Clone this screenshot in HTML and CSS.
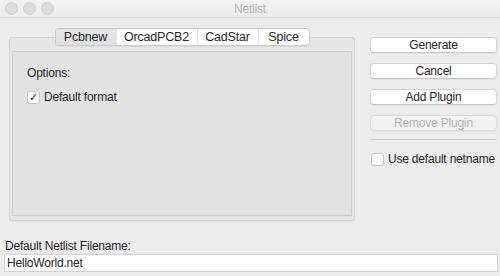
FILE: index.html
```html
<!DOCTYPE html>
<html lang="en">
<head>
  <meta charset="UTF-8">
  <meta name="viewport" content="width=device-width, initial-scale=1.0">
  <title>Netlist</title>
  <link rel="stylesheet" href="styles.css">
</head>
<body>
<div class="window">
  <!-- Title bar -->
  <div class="titlebar">
    <div class="lights">
      <span></span><span></span><span></span>
    </div>
    <div class="title">Netlist</div>
  </div>

  <div class="main">
    <!-- Format notebook -->
    <div class="notebook">
      <div class="tabs">
        <div class="tab selected tab-pcbnew">Pcbnew</div>
        <div class="tab tab-orcad">OrcadPCB2</div>
        <div class="tab tab-cadstar">CadStar</div>
        <div class="tab tab-spice">Spice</div>
      </div>
      <div class="page">
        <div class="page-inner">
          <div class="options-label">Options:</div>
          <label class="check">
            <span class="box checked">&#10003;</span>
            Default format
          </label>
        </div>
      </div>
    </div>

    <!-- Actions -->
    <div class="side">
      <button class="btn">Generate</button>
      <button class="btn">Cancel</button>
      <button class="btn">Add Plugin</button>
      <button class="btn" disabled>Remove Plugin</button>
      <div class="separator"></div>
      <label class="check">
        <span class="box"></span>
        Use default netname
      </label>
    </div>
  </div>

  <div class="filename">
    <div class="filename-label">Default Netlist Filename:</div>
    <div class="input">HelloWorld.net</div>
  </div>
</div>
</body>
</html>
```

FILE: styles.css
```css
body {
    margin: 0;
    padding: 0;
    background-color: #ececec;
    font-family: "Liberation Sans", Arial, sans-serif;
    font-size: 12px;
    letter-spacing: -0.2px;
    color: #262626;
}
.window {
    width: 500px;
    height: 276px;
    overflow: hidden;
}
.titlebar {
    height: 17px;
    border-bottom: 1px solid #d6d6d6;
    background: linear-gradient(#f3f3f3, #ebebeb);
    display: flex;
    align-items: center;
    position: relative;
}
.lights {
    display: flex;
    gap: 5px;
    padding-left: 5px;
}
.lights span {
    width: 11px;
    height: 11px;
    border-radius: 50%;
    background-color: #dcdcdc;
    border: 0.5px solid #d0d0d0;
}
.title {
    position: absolute;
    left: 0;
    right: 0;
    text-align: center;
    color: #b4b4b4;
    font-size: 12px;
}
.main {
    display: flex;
    padding: 10px 0 0 9px;
}
.notebook {
    width: 346px;
    display: flex;
    flex-direction: column;
    align-items: center;
}
.tabs {
    display: flex;
    height: 16px;
    border: 1px solid #c9c9c9;
    border-radius: 4px;
    background-color: white;
    margin-bottom: -9px;
    z-index: 1;
    box-shadow: 0 1px 0 rgba(0, 0, 0, 0.04);
}
.tab {
    text-align: center;
    line-height: 16px;
    font-size: 12.5px;
    border-left: 1px solid #e2e2e2;
}
.tab:first-child {
    border-left: none;
    border-radius: 3px 0 0 3px;
}
.tab.selected {
    background: linear-gradient(#e6e6e6, #dedede);
}
.tab-pcbnew { width: 60px; }
.tab-orcad { width: 80px; }
.tab-cadstar { width: 60px; }
.tab-spice { width: 50px; }
.page {
    align-self: stretch;
    height: 167px;
    padding: 13px 2px 2px 2px;
    background-color: #e6e6e6;
    border: 1px solid #d3d3d3;
    border-radius: 3px;
    box-shadow: 0 1px 1px rgba(0, 0, 0, 0.05);
}
.page-inner {
    height: 150px;
    background-color: #e2e2e2;
    border: 1px solid #cdcdcd;
    padding: 13px 0 0 14px;
}
.options-label {
    line-height: 16px;
    margin-bottom: 8px;
}
.check {
    display: flex;
    align-items: center;
    gap: 4px;
    line-height: 16px;
    white-space: nowrap;
}
.box {
    width: 11px;
    height: 11px;
    background-color: white;
    border: 1px solid #c4c4c4;
    border-radius: 3px;
    font-size: 11px;
    line-height: 11px;
    text-align: center;
    letter-spacing: 0;
    color: #222;
}
.side {
    width: 127px;
    margin-left: 15px;
    padding-top: 9px;
    display: flex;
    flex-direction: column;
}
.btn {
    height: 16px;
    margin-bottom: 10px;
    padding: 0;
    background-color: white;
    border: 1px solid #d3d3d3;
    border-bottom-color: #c4c4c4;
    border-radius: 4px;
    box-shadow: 0 1px 0 rgba(0, 0, 0, 0.03);
    font-family: inherit;
    font-size: 12px;
    line-height: 14px;
    letter-spacing: -0.2px;
    color: #262626;
}
.btn:disabled {
    margin-bottom: 8px;
    background-color: #f1f1f1;
    border-color: #dcdcdc;
    color: #b3b3b3;
}
.separator {
    height: 1px;
    background-color: #cfcfcf;
    margin-bottom: 11px;
}
.side .check {
    padding-left: 1px;
}
.filename {
    padding: 18px 4px 0 4px;
}
.filename-label {
    line-height: 15px;
    padding-left: 1px;
}
.input {
    height: 16px;
    width: 490px;
    background-color: white;
    border: 1px solid #d0d0d0;
    padding-left: 2px;
    line-height: 16px;
}
```
